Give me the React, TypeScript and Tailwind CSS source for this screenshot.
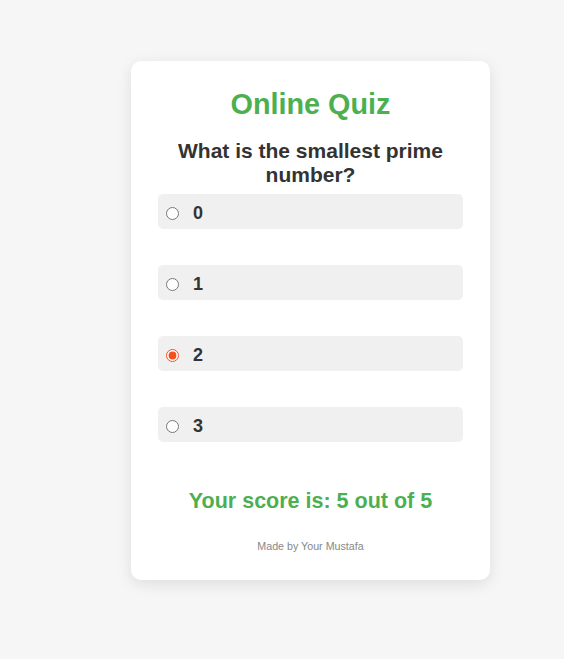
import { useState } from "react";

const options = ["0", "1", "2", "3"];

export default function App() {
    const [picked, setPicked] = useState("2");

    return (
        <main className="min-h-screen bg-[#f6f6f6] pt-[61px] font-['Liberation_Sans',Arial,sans-serif]">
            <div className="ml-[131px] w-[359px] rounded-[10px] bg-white px-[27px] pt-[27px] pb-[28px] shadow-[0_4px_15px_rgba(0,0,0,0.1)]">
                {/* Title */}
                <h1 className="text-center text-[28.8px] font-bold leading-[33px] text-[#4caf50]">
                    Online Quiz
                </h1>

                {/* Question */}
                <h2 className="mt-[18px] text-center text-[21px] font-bold leading-[24px] text-[#333]">
                    What is the smallest prime number?
                </h2>

                {/* Options */}
                <div className="mt-[7px] flex flex-col gap-[36px]">
                    {options.map((opt) => (
                        <label
                            key={opt}
                            className="flex h-[35px] cursor-pointer items-center rounded-[5px] bg-[#f0f0f0] pl-[8px] pt-[4px]"
                        >
                            <input
                                type="radio"
                                name="answer"
                                checked={picked === opt}
                                onChange={() => setPicked(opt)}
                                className="m-0 h-[13px] w-[13px] accent-[#f4511e]"
                            />
                            <span className="ml-[14px] text-[18px] font-bold text-[#333]">{opt}</span>
                        </label>
                    ))}
                </div>

                {/* Score */}
                <p className="mt-[47px] text-center text-[21.5px] font-bold leading-[24px] text-[#4caf50]">
                    Your score is: 5 out of 5
                </p>

                {/* Footer */}
                <p className="mt-[27px] text-center text-[10.7px] leading-[12px] text-[#888]">
                    Made by Your Mustafa
                </p>
            </div>
        </main>
    );
}
